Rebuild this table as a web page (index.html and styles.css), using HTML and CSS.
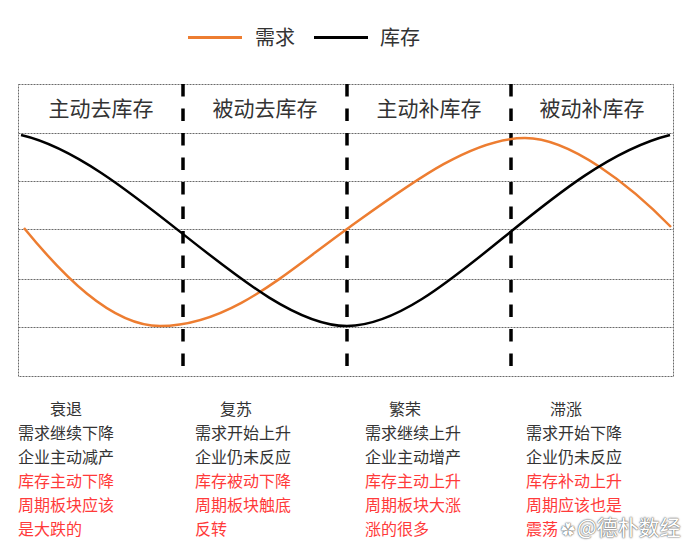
FILE: index.html
```html
<!DOCTYPE html>
<html lang="zh">
<head>
<meta charset="utf-8">
<link rel="stylesheet" href="styles.css">
</head>
<body>
<div class="page">
  <div class="legend">
    <span class="swatch orange"></span><span class="label">需求</span>
    <span class="swatch black"></span><span class="label">库存</span>
  </div>
  <svg class="chart" width="692" height="300" viewBox="0 80 692 300" xmlns="http://www.w3.org/2000/svg">
    <g class="grid">
      <rect x="18.5" y="84.5" width="655" height="292" fill="none"/>
      <line x1="18.5" y1="133.5" x2="673.5" y2="133.5"/>
      <line x1="18.5" y1="181.5" x2="673.5" y2="181.5"/>
      <line x1="18.5" y1="229.5" x2="673.5" y2="229.5"/>
      <line x1="18.5" y1="279.5" x2="673.5" y2="279.5"/>
      <line x1="18.5" y1="327.5" x2="673.5" y2="327.5"/>
    </g>
    <g class="heads">
      <text x="101" y="116">主动去库存</text>
      <text x="265" y="116">被动去库存</text>
      <text x="429" y="116">主动补库存</text>
      <text x="592" y="116">被动补库存</text>
    </g>
    <g class="dividers">
      <line x1="183" y1="84" x2="183" y2="368"/>
      <line x1="347" y1="84" x2="347" y2="368"/>
      <line x1="511" y1="84" x2="511" y2="368"/>
    </g>
    <path class="demand" d="M24,228 C60,272 110,326 160,326 C230,326 287,272 347,229 C407,186 470,138 525,138 C570,138 630,185 671,227"/>
    <path class="stock" d="M21,135 C130,160 255,326 347,326 C440,326 550,165 670,135"/>
  </svg>
  <div class="notes">
    <div class="col c1">
      <div class="title">衰退</div>
      <div>需求继续下降</div>
      <div>企业主动减产</div>
      <div class="red">库存主动下降</div>
      <div class="red">周期板块应该</div>
      <div class="red">是大跌的</div>
    </div>
    <div class="col c2">
      <div class="title">复苏</div>
      <div>需求开始上升</div>
      <div>企业仍未反应</div>
      <div class="red">库存被动下降</div>
      <div class="red">周期板块触底</div>
      <div class="red">反转</div>
    </div>
    <div class="col c3">
      <div class="title">繁荣</div>
      <div>需求继续上升</div>
      <div>企业主动增产</div>
      <div class="red">库存主动上升</div>
      <div class="red">周期板块大涨</div>
      <div class="red">涨的很多</div>
    </div>
    <div class="col c4">
      <div class="title">滞涨</div>
      <div>需求开始下降</div>
      <div>企业仍未反应</div>
      <div class="red">库存补动上升</div>
      <div class="red">周期应该也是</div>
      <div class="red">震荡</div>
    </div>
  </div>
  <div class="watermark"><span class="wm-icon">✿</span>@德朴数经</div>
</div>
</body>
</html>
```

FILE: styles.css
```css
html, body {
  margin: 0;
  padding: 0;
  background: #ffffff;
}
body {
  font-family: "Noto Sans CJK SC", "Noto Sans", sans-serif;
  color: #333333;
}
.page {
  position: relative;
  width: 692px;
  height: 551px;
  overflow: hidden;
}
.legend {
  height: 80px;
  display: flex;
  align-items: center;
  padding-left: 188px;
  box-sizing: border-box;
  padding-bottom: 6px;
}
.swatch {
  display: inline-block;
  width: 54px;
  height: 3px;
}
.swatch.orange { background: #ed7d31; margin-right: 13px; }
.swatch.black { background: #000000; margin-right: 12px; margin-left: 19px; }
.label {
  font-size: 20px;
  line-height: 24px;
  color: #333333;
}
.chart {
  display: block;
}
.grid line, .grid rect {
  stroke: #6a6a6a;
  stroke-width: 1;
  stroke-dasharray: 2 1;
}
.heads text {
  font-family: "Noto Sans CJK SC", sans-serif;
  font-size: 21px;
  fill: #333333;
  text-anchor: middle;
}
.dividers line {
  stroke: #000000;
  stroke-width: 3.5;
  stroke-dasharray: 12.5 12;
}
.demand {
  fill: none;
  stroke: #ed7d31;
  stroke-width: 2.5;
}
.stock {
  fill: none;
  stroke: #000000;
  stroke-width: 2.5;
}
.notes {
  margin-top: 16px;
  display: grid;
  grid-template-columns: 177px 170px 161px 1fr;
  padding-left: 18px;
  font-size: 16px;
  line-height: 24px;
}
.col .title { color: #333333; }
.c1 .title { padding-left: 32px; }
.c2 .title { padding-left: 25px; }
.c3 .title { padding-left: 24px; }
.c4 .title { padding-left: 24px; }
.red { color: #ff3a3a; }
.watermark {
  position: absolute;
  left: 561px;
  top: 517px;
  font-size: 21px;
  line-height: 18px;
  color: #ffffff;
  text-shadow: 0 0 2px #555555, 0 0 1px #555555;
  white-space: nowrap;
}
.wm-icon {
  font-size: 14px;
  margin-right: 2px;
}
```
